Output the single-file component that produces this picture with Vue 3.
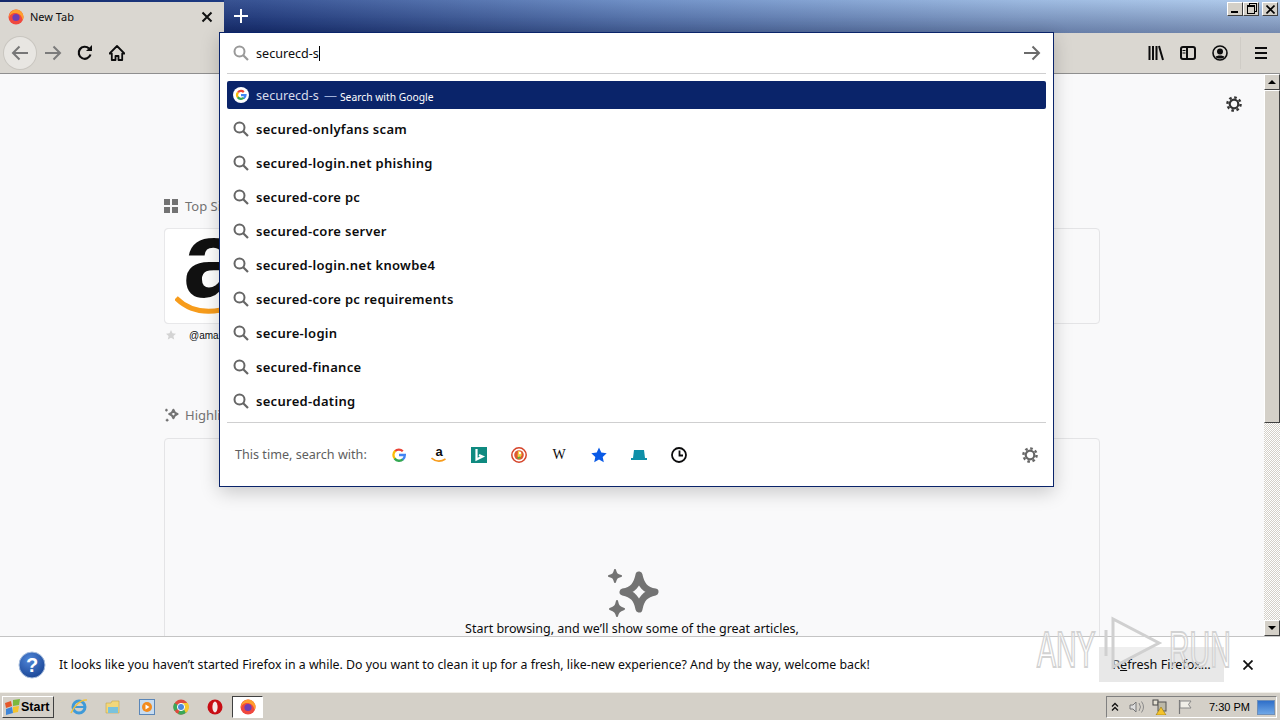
<script setup>
const suggestions = [
  'secured-onlyfans scam',
  'secured-login.net phishing',
  'secured-core pc',
  'secured-core server',
  'secured-login.net knowbe4',
  'secured-core pc requirements',
  'secure-login',
  'secured-finance',
  'secured-dating'
];
</script>

<template>
  <div class="window">
    <div class="tabbar">
      <div class="tab">
        <svg class="ff" width="16" height="16" viewBox="0 0 16 16">
          <circle cx="8" cy="8" r="7.500" fill="#f0483e" />
          <path d="M1 9A7.500 7.500 0 0 1 8 .5c4 0 7.500 3 7.500 7.500 0 2-1 3-1 3C14 6 10 3.500 6 4 3 4.500 1 7 1 9z" fill="#ff9f2e" />
          <circle cx="8" cy="8.500" r="3.600" fill="#6e3fb5" />
        </svg>
        <span class="tab-title">New Tab</span>
        <svg class="tab-x" width="12" height="12" viewBox="0 0 12 12"><path d="M1.500 1.500l9 9M10.500 1.500l-9 9" stroke="#111" stroke-width="2" /></svg>
      </div>
      <svg class="plus" width="14" height="14" viewBox="0 0 14 14"><path d="M7 0v14M0 7h14" stroke="#fff" stroke-width="2" /></svg>
      <div class="win-btns">
        <button class="win-btn"><span class="min"></span></button>
        <button class="win-btn"><span class="rest"></span></button>
        <button class="win-btn close">
          <svg width="9" height="9" viewBox="0 0 9 9"><path d="M.5.5l8 8M8.500.5l-8 8" stroke="#000" stroke-width="1.600" /></svg>
        </button>
      </div>
    </div>

    <div class="toolbar">
      <div class="nav-btn back">
        <svg width="18" height="16" viewBox="0 0 18 16"><path d="M17 8H2M8.500 1.500L2 8l6.500 6.500" fill="none" stroke="#777" stroke-width="2" /></svg>
      </div>
      <div class="nav-btn">
        <svg width="18" height="16" viewBox="0 0 18 16"><path d="M1 8h15M9.500 1.500L16 8l-6.500 6.500" fill="none" stroke="#7b7b7b" stroke-width="2" /></svg>
      </div>
      <div class="nav-btn">
        <svg width="16" height="16" viewBox="0 0 16 16"><path d="M13.500 9.500A6 6 0 1 1 12 3.500" fill="none" stroke="#0c0c0d" stroke-width="2.200" /><path d="M9 6h6V0z" fill="#0c0c0d" /></svg>
      </div>
      <div class="nav-btn">
        <svg width="16" height="16" viewBox="0 0 16 16"><path d="M8 1L.5 8.500h2.300V15h3.700v-4h3v4h3.700V8.500h2.300z" fill="none" stroke="#0c0c0d" stroke-width="1.800" stroke-linejoin="round" /></svg>
      </div>
      <div class="spacer"></div>
      <div class="nav-btn">
        <svg width="16" height="16" viewBox="0 0 16 16"><path d="M1.500 1v14M5 1v14M8.500 1v14M11 1l4 14" fill="none" stroke="#0c0c0d" stroke-width="2" /></svg>
      </div>
      <div class="nav-btn">
        <svg width="16" height="14" viewBox="0 0 16 14"><rect x="1" y="1" width="14" height="12" rx="2" fill="none" stroke="#0c0c0d" stroke-width="2" /><path d="M7 1v12" stroke="#0c0c0d" stroke-width="2" /><path d="M2.500 4.500h3M2.500 7h3" stroke="#0c0c0d" /></svg>
      </div>
      <div class="nav-btn">
        <svg width="16" height="16" viewBox="0 0 16 16"><circle cx="8" cy="8" r="7" fill="none" stroke="#0c0c0d" stroke-width="1.600" /><circle cx="8" cy="6.500" r="3" fill="#0c0c0d" /><path d="M3.500 12c1-2 8-2 9 0-2 2-7 2-9 0z" fill="#0c0c0d" /></svg>
      </div>
      <div class="tool-sep"></div>
      <div class="nav-btn">
        <svg width="14" height="12" viewBox="0 0 14 12"><path d="M1 1h12M1 6h12M1 11h12" stroke="#0c0c0d" stroke-width="2" /></svg>
      </div>
    </div>

    <div class="content">
      <div class="page">
        <div class="gear-row">
          <svg width="16" height="16" viewBox="0 0 16 16"><circle cx="8" cy="8" r="4.300" fill="none" stroke="#333" stroke-width="2.200" /><circle cx="8" cy="8" r="6.600" fill="none" stroke="#333" stroke-width="2.400" stroke-dasharray="2.600 2.580" /></svg>
        </div>

        <div class="section-title first">
          <svg width="14" height="14" viewBox="0 0 14 14" fill="#737373"><rect width="6" height="6" /><rect x="8" width="6" height="6" /><rect y="8" width="6" height="6" /><rect x="8" y="8" width="6" height="6" /></svg>
          <span>Top Sites</span>
        </div>
        <div class="sites-box">
          <div class="tile">
            <span class="amazon-a">a</span>
            <svg class="amazon-smile" width="60" height="24" viewBox="0 0 60 24"><path d="M1 4c14 14 34 17 59 8" fill="none" stroke="#f79c1c" stroke-width="5" /></svg>
          </div>
        </div>
        <div class="tile-cap">
          <svg width="10" height="10" viewBox="0 0 10 10"><path d="M5 0l1.500 3.300 3.500.4-2.600 2.300.8 3.500L5 7.700 1.800 9.500l.8-3.500L0 3.700l3.500-.4z" fill="#d3d3d3" /></svg>
          <span>@amazon</span>
        </div>

        <div class="section-title second">
          <svg width="16" height="16" viewBox="-24 -22 46 46">
            <path d="M3 -14C5 -6 7 -4 15 -2C7 0 5 2 3 10C1 2 -1 0 -9 -2C-1 -4 1 -6 3 -14Z" fill="none" stroke="#737373" stroke-width="6" stroke-linejoin="round" />
            <path d="M-17 -17v8M-21 -13h8M-15 12v8M-19 16h8" stroke="#737373" stroke-width="4" />
          </svg>
          <span>Highlights</span>
        </div>
        <div class="high-box">
          <svg class="stars" width="52" height="48" viewBox="0 0 52 48">
            <path d="M31 6C33 16 37 21 47 23C37 25 33 30 31 40C29 30 25 25 15 23C25 21 29 16 31 6Z" fill="none" stroke="#737373" stroke-width="7" stroke-linejoin="round" />
            <path d="M7 1C8 5 9 6 13 7C9 8 8 9 7 13C6 9 5 8 1 7C5 6 6 5 7 1Z" fill="#737373" stroke="#737373" stroke-width="2" stroke-linejoin="round" />
            <path d="M9 32C10 37 11 38 16 40C11 42 10 43 9 47C8 43 7 42 2 40C7 38 8 37 9 32Z" fill="#737373" stroke="#737373" stroke-width="2" stroke-linejoin="round" />
          </svg>
          <p class="high-text">Start browsing, and we’ll show some of the great articles,</p>
        </div>
      </div>

      <div class="scrollbar">
        <div class="sb-btn"><span class="tri up"></span></div>
        <div class="sb-thumb"></div>
        <div class="sb-track"></div>
        <div class="sb-btn"><span class="tri down"></span></div>
      </div>

      <div class="dropdown">
        <div class="input-row">
          <svg class="mag" width="16" height="16" viewBox="0 0 16 16"><circle cx="6.500" cy="6.500" r="5" fill="none" stroke="#999" stroke-width="2" /><path d="M10 10l5 5" stroke="#999" stroke-width="2.200" /></svg>
          <span class="typed">securecd-s</span><span class="caret"></span>
          <div class="spacer"></div>
          <svg width="18" height="16" viewBox="0 0 18 16"><path d="M1 8h15M9.500 1.500L16 8l-6.500 6.500" fill="none" stroke="#6b6b6b" stroke-width="2" /></svg>
        </div>
        <div class="rule"></div>
        <div class="results">
          <div class="row selected">
            <span class="g-badge">
              <svg width="12" height="12" viewBox="0 0 24 24">
                <path d="M12 4a8 8 0 0 1 5.600 2.200" fill="none" stroke="#ea4335" stroke-width="4.500" />
                <path d="M6 7a8 8 0 0 0 0 10" fill="none" stroke="#fbbc05" stroke-width="4.500" />
                <path d="M5.600 16.500a8 8 0 0 0 12 1" fill="none" stroke="#34a853" stroke-width="4.500" />
                <path d="M12 12h9c0 3-1 5-3.400 6.500" fill="none" stroke="#4285f4" stroke-width="4.500" />
                <path d="M6 6.500A8 8 0 0 1 12 4" fill="none" stroke="#ea4335" stroke-width="4.500" />
              </svg>
            </span>
            <span class="sel-q">securecd-s</span>
            <span class="sel-dash">—</span>
            <span class="sel-action">Search with Google</span>
          </div>
          <div v-for="s in suggestions" :key="s" class="row">
            <svg class="mag" width="16" height="16" viewBox="0 0 16 16"><circle cx="6.500" cy="6.500" r="5" fill="none" stroke="#666" stroke-width="2" /><path d="M10 10l5 5" stroke="#666" stroke-width="2.200" /></svg>
            <span class="sugg">{{ s }}</span>
          </div>
        </div>
        <div class="rule foot-rule"></div>
        <div class="engines">
          <span class="engines-label">This time, search with:</span>
          <div class="engine-list">
            <span class="engine">
              <svg width="14" height="14" viewBox="0 0 24 24">
                <path d="M18.500 5.500A9.500 9.500 0 0 0 5 5.500" fill="none" stroke="#ea4335" stroke-width="4" />
                <path d="M5.500 5A9.500 9.500 0 0 0 5 18.500" fill="none" stroke="#fbbc05" stroke-width="4" />
                <path d="M4.500 18A9.500 9.500 0 0 0 19 19" fill="none" stroke="#34a853" stroke-width="4" />
                <path d="M12 12h10c0 3-1 6-3.500 8" fill="none" stroke="#4285f4" stroke-width="4" />
              </svg>
            </span>
            <span class="engine amz">
              <span class="amz-a">a</span>
              <svg class="amz-smile" width="15" height="6" viewBox="0 0 15 6"><path d="M.5 1c4 3.500 9 4 14 1" fill="none" stroke="#f79c1c" stroke-width="1.600" /></svg>
            </span>
            <span class="engine">
              <svg width="16" height="16" viewBox="0 0 16 16"><rect width="16" height="16" fill="#0f8a80" /><path d="M5.500 2v10.500l6-3-3.500-1.500" fill="none" stroke="#fff" stroke-width="2.200" /></svg>
            </span>
            <span class="engine">
              <svg width="16" height="16" viewBox="0 0 16 16"><circle cx="8" cy="8" r="7.200" fill="#fff" stroke="#d5442a" stroke-width="1.500" /><circle cx="8" cy="8" r="4.800" fill="#de5833" /><path d="M7 4c3 0 4 2 3.500 4.500L8 12 6.500 9z" fill="#f4d03f" /><circle cx="9" cy="6" r="1.200" fill="#fff" /><path d="M6 10.500l3-1 1 1.500-3 1z" fill="#5bab3a" /></svg>
            </span>
            <span class="engine wiki">W</span>
            <span class="engine">
              <svg width="16" height="16" viewBox="0 0 16 16"><path d="M8 .5l2.300 5 5.400.7-4 3.700 1.100 5.400L8 12.600l-4.800 2.700 1.100-5.400-4-3.700 5.400-.7z" fill="#0a5ae6" /></svg>
            </span>
            <span class="engine">
              <svg width="16" height="12" viewBox="0 0 16 12"><path d="M3 1h10l1 8h2v2H0V9h2z" fill="#0e8fa8" /></svg>
            </span>
            <span class="engine">
              <svg width="16" height="16" viewBox="0 0 16 16"><circle cx="8" cy="8" r="7" fill="none" stroke="#0c0c0d" stroke-width="1.800" /><path d="M8.500 3.500V8.500H12" fill="none" stroke="#0c0c0d" stroke-width="1.800" /></svg>
            </span>
          </div>
          <div class="spacer"></div>
          <svg width="16" height="16" viewBox="0 0 16 16"><circle cx="8" cy="8" r="4.300" fill="none" stroke="#666" stroke-width="2.200" /><circle cx="8" cy="8" r="6.600" fill="none" stroke="#666" stroke-width="2.400" stroke-dasharray="2.600 2.580" /></svg>
        </div>
      </div>
    </div>

    <div class="notice">
      <svg width="28" height="28" viewBox="0 0 28 28">
        <defs><radialGradient id="qblue" cx="0.4" cy="0.3" r="0.8"><stop offset="0" stop-color="#4f86d8" /><stop offset="1" stop-color="#153f8f" /></radialGradient></defs>
        <circle cx="14" cy="14" r="13" fill="url(#qblue)" stroke="#a8bedd" />
        <text x="14" y="21" text-anchor="middle" class="q-mark">?</text>
      </svg>
      <span class="notice-text">It looks like you haven’t started Firefox in a while. Do you want to clean it up for a fresh, like-new experience? And by the way, welcome back!</span>
      <div class="spacer"></div>
      <button class="refresh">R<u>e</u>fresh Firefox…</button>
      <svg class="notice-x" width="10" height="10" viewBox="0 0 10 10"><path d="M.5.500l9 9M9.500.500l-9 9" stroke="#111" stroke-width="1.800" /></svg>
    </div>

    <div class="watermark">
      <span class="wm-box"><span class="wm-text">ANY</span></span>
      <svg width="60" height="54" viewBox="0 0 60 54"><path d="M3 14v26M10 3v48l46-24z" fill="rgba(255,255,255,.3)" stroke="#d0d0d0" stroke-width="3" /></svg>
      <span class="wm-box"><span class="wm-text">RUN</span></span>
    </div>

    <div class="taskbar">
      <button class="start">
        <svg width="17" height="16" viewBox="0 0 17 16">
          <path d="M1 4l6-2 1 5-6 2z" fill="#e5582a" />
          <path d="M9 1l7-1-1 6-6 1z" fill="#7cb83e" />
          <path d="M2 10l6-2 1 6-7 2z" fill="#3f86d8" />
          <path d="M9 8l6-1-1 6-5 1z" fill="#f4c32c" />
        </svg>
        <span>Start</span>
      </button>
      <div class="quick">
        <span class="q-icon">
          <svg width="18" height="18" viewBox="0 0 18 18"><circle cx="9" cy="9" r="6" fill="none" stroke="#3f9ad8" stroke-width="3" /><path d="M4 9h10" stroke="#3f9ad8" stroke-width="2" /><path d="M1 15C4 8 11 1 17 2" fill="none" stroke="#f0c23e" stroke-width="1.500" /></svg>
        </span>
        <span class="q-icon">
          <svg width="16" height="16" viewBox="0 0 16 16"><path d="M1 4h5l1-2h7v12H1z" fill="#f2d77a" stroke="#c2a64e" stroke-width=".6" /><rect x="3" y="8" width="10" height="6" fill="#7ac2dc" /></svg>
        </span>
        <span class="q-icon">
          <svg width="16" height="16" viewBox="0 0 16 16"><rect x=".5" y=".5" width="15" height="15" fill="#c8dcf0" stroke="#5a86b8" /><circle cx="8" cy="8" r="5" fill="#f28b1e" /><path d="M6.500 5.500l4 2.500-4 2.500z" fill="#fff" /></svg>
        </span>
        <span class="q-icon">
          <svg width="16" height="16" viewBox="0 0 16 16"><circle cx="8" cy="8" r="7.500" fill="#dd4b3e" /><path d="M8 8L1.500 12A7.500 7.500 0 0 1 1.500 4z" fill="#3aa757" /><path d="M8 8l-3 7a7.500 7.500 0 0 0 9.500-3z" fill="#3aa757" /><path d="M8 4h6.800a7.500 7.500 0 0 1-2 10z" fill="#f6c92f" /><circle cx="8" cy="8" r="3.600" fill="#4a89dc" stroke="#fff" /></svg>
        </span>
        <span class="q-icon">
          <svg width="16" height="16" viewBox="0 0 16 16"><circle cx="8" cy="8" r="7.500" fill="#c80d14" /><ellipse cx="8" cy="8" rx="2.600" ry="5.400" fill="#f4e8e8" /></svg>
        </span>
        <span class="q-icon active">
          <svg width="16" height="16" viewBox="0 0 16 16">
            <circle cx="8" cy="8" r="7.500" fill="#f0483e" />
            <path d="M1 9A7.500 7.500 0 0 1 8 .5c4 0 7.500 3 7.500 7.500 0 2-1 3-1 3C14 6 10 3.500 6 4 3 4.500 1 7 1 9z" fill="#ff9f2e" />
            <circle cx="8" cy="8.500" r="3.600" fill="#6e3fb5" />
          </svg>
        </span>
      </div>
      <div class="spacer"></div>
      <div class="tray">
        <svg width="8" height="10" viewBox="0 0 8 10"><path d="M1 4.500l3-3 3 3M1 8.500l3-3 3 3" fill="none" stroke="#111" stroke-width="1.300" /></svg>
        <svg class="t-vol" width="16" height="14" viewBox="0 0 16 14"><path d="M1 5h3l3-3v10L4 9H1z" fill="#ddd" stroke="#777" /><path d="M10 3q3 4 0 8M12.500 1.500q4 5.500 0 11" fill="none" stroke="#8a8a8a" /></svg>
        <svg class="t-net" width="16" height="16" viewBox="0 0 16 16"><rect x="1" y="1" width="5" height="5" fill="#e5e1d3" stroke="#444" /><rect x="6" y="3" width="8" height="9" fill="#bcb9a8" stroke="#555" /><path d="M9 8l5 8H4z" fill="#f4c32c" stroke="#8a6b00" stroke-width=".5" /></svg>
        <svg class="t-flag" width="16" height="16" viewBox="0 0 16 16"><path d="M2.500 1v14" stroke="#777" stroke-width="1.200" /><path d="M3 2h11l-2.500 3.500L14 9H3z" fill="#f1efe8" stroke="#888" /></svg>
        <span class="clock">7:30 PM</span>
        <span class="desktop"></span>
      </div>
    </div>
  </div>
</template>

<style scoped>
.window {
  position: relative;
  display: flex;
  flex-direction: column;
  width: 1280px;
  height: 720px;
  overflow: hidden;
  font-family: "Noto Sans", "DejaVu Sans", sans-serif;
  color: #0c0c0d;
}

.spacer {
  flex: 1;
}

.tabbar {
  display: flex;
  align-items: center;
  height: 33px;
  flex-shrink: 0;
  background: linear-gradient(90deg, #14296b 0%, #1e3d86 20%, #5d82bf 50%, #8fb0dc 80%, #a8c6ea 100%);
  position: relative;
}

.tabbar::after {
  content: "";
  position: absolute;
  left: 224px;
  right: 0;
  top: 0;
  bottom: 0;
  background: linear-gradient(180deg, rgba(255, 255, 255, 0.12), rgba(0, 0, 40, 0.3));
  pointer-events: none;
}

.tab {
  display: flex;
  align-items: center;
  width: 224px;
  height: 31px;
  margin-top: 2px;
  box-sizing: border-box;
  padding: 0 11px 2px 8px;
  background: #dad7d1;
}

.tab-title {
  margin-left: 6px;
  font-size: 11px;
  flex: 1;
}

.plus {
  margin-left: 10px;
  margin-top: -1px;
  z-index: 1;
}

.win-btns {
  display: flex;
  position: absolute;
  top: 2px;
  right: 2px;
  z-index: 1;
}

.win-btn {
  width: 16px;
  height: 14px;
  padding: 0;
  background: #d4d0c8;
  border: 1px solid;
  border-color: #fff #404040 #404040 #fff;
  position: relative;
  display: flex;
  align-items: center;
  justify-content: center;
}

.win-btn.close {
  margin-left: 3px;
}

.min {
  position: absolute;
  left: 3px;
  bottom: 2px;
  width: 7px;
  height: 2px;
  background: #000;
}

.rest {
  width: 6px;
  height: 6px;
  border: 1px solid #000;
  border-top-width: 2px;
  box-shadow: 2px -2px 0 -1px #d4d0c8, 2px -2px 0 0 #000;
}

.toolbar {
  display: flex;
  align-items: center;
  height: 41px;
  flex-shrink: 0;
  box-sizing: border-box;
  padding: 0 3px 0 4px;
  background: #dad7d1;
  border-bottom: 1px solid #8f8f8f;
}

.nav-btn {
  display: flex;
  align-items: center;
  justify-content: center;
  width: 32px;
  height: 32px;
}

.nav-btn.back {
  margin-right: 1px;
  border-radius: 50%;
  background: #e8e6e2;
  box-shadow: 0 0 0 1px #c9c6c0;
}

.tool-sep {
  width: 1px;
  height: 32px;
  margin: 0 4px 0 4px;
  background: #cfccc6;
}

.content {
  position: relative;
  flex: 1;
  display: flex;
  min-height: 0;
}

.page {
  flex: 1;
  background: #f9f9fa;
  overflow: hidden;
}

.gear-row {
  display: flex;
  justify-content: flex-end;
  padding: 22px 22px 0 0;
}

.section-title {
  display: flex;
  align-items: center;
  gap: 7px;
  height: 16px;
  margin-left: 164px;
  font-size: 13px;
  color: #737373;
}

.section-title.first {
  margin-top: 86px;
}

.section-title.second {
  margin-top: 65px;
  gap: 5px;
}

.sites-box {
  width: 936px;
  height: 96px;
  margin: 14px 0 0 164px;
  box-sizing: border-box;
  border: 1px solid #e4e4e6;
  border-radius: 4px;
}

.tile {
  position: relative;
  width: 96px;
  height: 94px;
  overflow: hidden;
  background: #fff;
  border-radius: 4px;
  box-shadow: 0 0 0 1px #e8e8ea;
}

.amazon-a {
  position: absolute;
  left: 18px;
  top: -33px;
  font-family: "Liberation Sans", sans-serif;
  font-weight: 700;
  font-size: 110px;
  line-height: 125px;
  color: #111;
}

.amazon-smile {
  position: absolute;
  left: 10px;
  top: 65px;
}

.tile-cap {
  display: flex;
  align-items: center;
  gap: 13px;
  height: 14px;
  margin: 4px 0 0 166px;
  font-family: "Liberation Sans", sans-serif;
  font-size: 10px;
}

.high-box {
  display: flex;
  flex-direction: column;
  align-items: center;
  width: 936px;
  height: 300px;
  margin: 15px 0 0 164px;
  box-sizing: border-box;
  border: 1px solid #e4e4e6;
  border-radius: 4px;
}

.stars {
  margin: 130px 0 0 4px;
}

.high-text {
  margin: 3px 0 0;
  font-size: 12.5px;
  line-height: 17px;
}

.scrollbar {
  display: flex;
  flex-direction: column;
  width: 16px;
  flex-shrink: 0;
}

.sb-btn {
  display: flex;
  align-items: center;
  justify-content: center;
  height: 16px;
  box-sizing: border-box;
  flex-shrink: 0;
  background: #d4d0c8;
  border: 1px solid;
  border-color: #fff #404040 #404040 #fff;
}

.sb-thumb {
  height: 333px;
  box-sizing: border-box;
  background: #d4d0c8;
  border: 1px solid;
  border-color: #fff #404040 #404040 #fff;
}

.sb-track {
  flex: 1;
  background-image: conic-gradient(#fff 25%, #d4d0c8 0 50%, #fff 0 75%, #d4d0c8 0);
  background-size: 2px 2px;
}

.tri {
  width: 0;
  height: 0;
  border-left: 4px solid transparent;
  border-right: 4px solid transparent;
}

.tri.up {
  border-bottom: 4px solid #000;
}

.tri.down {
  border-top: 4px solid #000;
}

.dropdown {
  position: absolute;
  left: 219px;
  top: -42px;
  width: 835px;
  height: 455px;
  box-sizing: border-box;
  display: flex;
  flex-direction: column;
  background: #fff;
  border: 1px solid #0a246a;
  box-shadow: 0 5px 18px rgba(0, 0, 0, 0.2);
  z-index: 2;
}

.input-row {
  display: flex;
  align-items: center;
  height: 40px;
  flex-shrink: 0;
  padding: 0 12px 0 13px;
  font-size: 12.6px;
}

.mag {
  flex-shrink: 0;
}

.typed {
  margin-left: 7px;
}

.caret {
  width: 1px;
  height: 15px;
  background: #000;
}

.rule {
  height: 1px;
  flex-shrink: 0;
  margin: 0 7px;
  background: #cfcfd0;
}

.results {
  display: flex;
  flex-direction: column;
  gap: 6px;
  padding-top: 7px;
}

.row {
  display: flex;
  align-items: center;
  height: 28px;
  margin: 0 7px;
  padding-left: 6px;
  border-radius: 2px;
  font-size: 13px;
}

.row.selected {
  background: #0a246a;
  color: #fff;
}

.g-badge {
  display: flex;
  align-items: center;
  justify-content: center;
  width: 16px;
  height: 16px;
  border-radius: 50%;
  background: #fff;
}

.sel-q {
  margin-left: 7px;
  font-size: 12.6px;
  color: #d7dcea;
}

.sel-dash {
  margin-left: 5px;
  color: #9fb0d8;
}

.sel-action {
  margin: 3px 0 0 3px;
  font-size: 10.3px;
}

.sugg {
  margin-left: 7px;
  font-weight: 600;
  letter-spacing: 0.3px;
}

.foot-rule {
  margin-top: 7px;
}

.engines {
  flex: 1;
  display: flex;
  align-items: center;
  padding: 0 15px;
}

.engines-label {
  width: 144px;
  flex-shrink: 0;
  font-size: 12.6px;
  color: #5e5e5e;
}

.engine-list {
  display: flex;
}

.engine {
  position: relative;
  display: flex;
  align-items: center;
  justify-content: center;
  width: 40px;
  height: 24px;
}

.amz-a {
  font-family: "Liberation Sans", sans-serif;
  font-weight: 700;
  font-size: 13px;
  margin-top: -6px;
}

.amz-smile {
  position: absolute;
  left: 12px;
  top: 14px;
}

.wiki {
  font-family: "Liberation Serif", serif;
  font-size: 14px;
}

.notice {
  display: flex;
  align-items: center;
  height: 56px;
  flex-shrink: 0;
  box-sizing: border-box;
  padding: 0 27px 0 18px;
  background: #fff;
  border-top: 1px solid #c4c4c4;
  position: relative;
}

.q-mark {
  fill: #fff;
  font-family: "Liberation Sans", sans-serif;
  font-weight: 700;
  font-size: 20px;
}

.notice-text {
  margin-left: 13px;
  font-size: 12.35px;
}

.refresh {
  width: 125px;
  height: 35px;
  margin-right: 19px;
  padding: 0;
  border: 0;
  background: #e8e8e8;
  font-family: inherit;
  font-size: 12.6px;
  color: #0c0c0d;
}

.watermark {
  position: absolute;
  left: 1037px;
  top: 609px;
  display: flex;
  align-items: center;
  gap: 6px;
  pointer-events: none;
  z-index: 3;
}

.wm-box {
  width: 60px;
  height: 54px;
  margin-top: 14px;
}

.wm-text {
  display: block;
  width: 110px;
  transform: scaleX(0.57);
  transform-origin: left top;
  font-family: "Liberation Sans", sans-serif;
  font-size: 50px;
  line-height: 54px;
  color: rgba(255, 255, 255, 0.4);
  -webkit-text-stroke: 2px #d2d2d2;
}

.taskbar {
  display: flex;
  align-items: center;
  height: 28px;
  flex-shrink: 0;
  box-sizing: border-box;
  padding: 1px 3px 0 2px;
  background: #d4d0c8;
  border-top: 1px solid #f2f0ea;
}

.start {
  display: flex;
  align-items: center;
  gap: 0;
  width: 52px;
  height: 22px;
  padding: 0 0 0 1px;
  box-sizing: border-box;
  background: #d4d0c8;
  border: 1px solid;
  border-color: #fff #404040 #404040 #fff;
  font-family: "Liberation Sans", sans-serif;
  font-weight: 700;
  font-size: 12.5px;
  color: #000;
}

.quick {
  display: flex;
  align-items: center;
  margin-left: 8px;
}

.q-icon {
  display: flex;
  align-items: center;
  justify-content: center;
  width: 34px;
  height: 22px;
}

.q-icon.active {
  width: 31px;
  box-sizing: border-box;
  background: #fff;
  border: 1px solid;
  border-color: #404040 #fff #fff #404040;
}

.tray {
  display: flex;
  align-items: center;
  width: 171px;
  height: 22px;
  box-sizing: border-box;
  padding: 0 1px 0 4px;
  border: 1px solid;
  border-color: #808080 #fff #fff #808080;
}

.t-vol {
  margin-left: 10px;
}

.t-net {
  margin-left: 7px;
}

.t-flag {
  margin-left: 9px;
}

.clock {
  margin-left: 16px;
  white-space: nowrap;
  font-family: "Liberation Sans", sans-serif;
  font-size: 11px;
  color: #000;
}

.desktop {
  width: 16px;
  height: 13px;
  margin-left: auto;
  background: linear-gradient(180deg, #2f6fc9, #6fa7e6);
  border: 1px solid #6f8fb8;
}
</style>

<style>
body {
  margin: 0;
  overflow: hidden;
}
</style>
